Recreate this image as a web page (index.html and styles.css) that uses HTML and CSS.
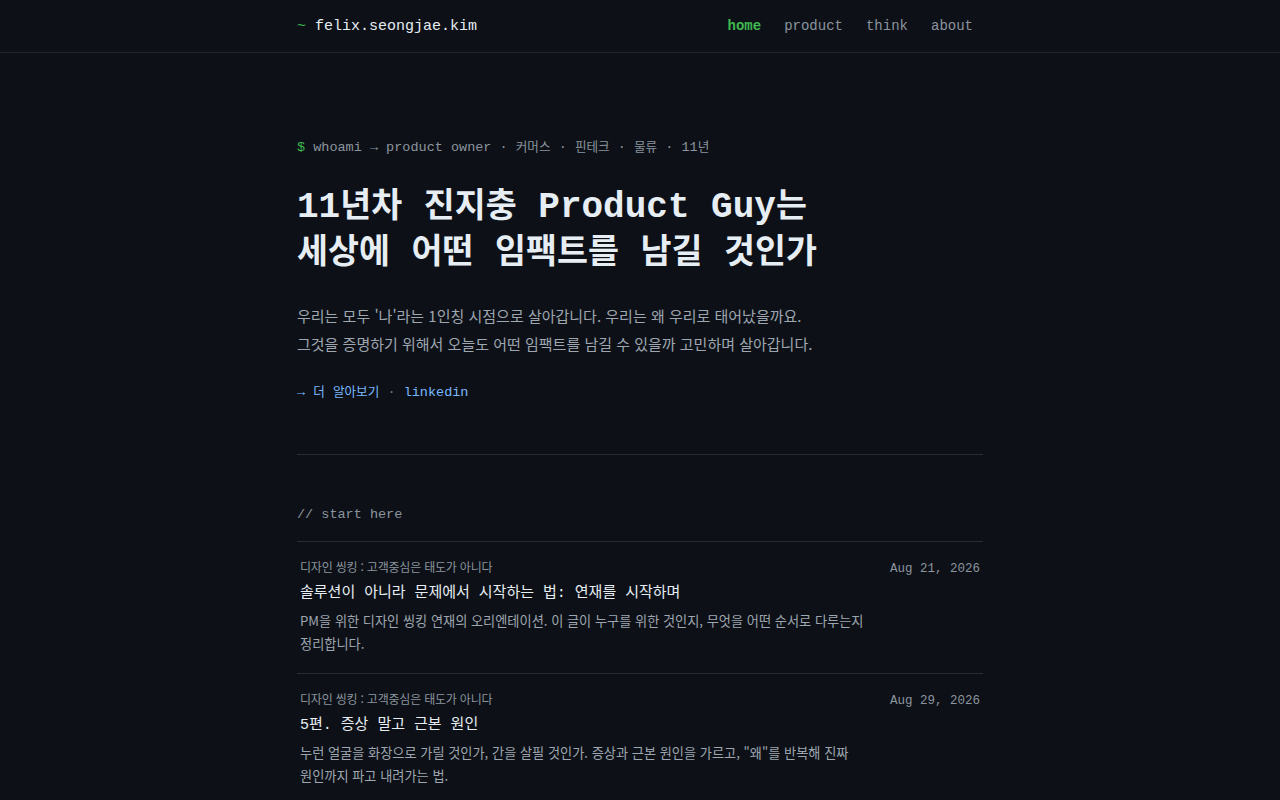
FILE: index.html
```html
<!DOCTYPE html>
<html lang="ko">
<head>
<meta charset="utf-8">
<title>felix.seongjae.kim</title>
<link rel="stylesheet" href="styles.css">
</head>
<body>
<header class="topbar">
  <div class="topbar-inner">
    <a class="logo" href="#"><span class="tilde">~</span> felix.seongjae.kim</a>
    <nav class="nav">
      <a class="active" href="#">home</a>
      <a href="#">product</a>
      <a href="#">think</a>
      <a href="#">about</a>
    </nav>
  </div>
</header>
<main class="wrap">
  <section class="hero">
    <p class="prompt"><span class="dollar">$</span> whoami → product owner · <span class="ko">커머스</span> · <span class="ko">핀테크</span> · <span class="ko">물류</span> · 11<span class="ko">년</span></p>
    <h1 class="title">11<span class="ko">년차</span> <span class="ko">진지충</span> Product Guy<span class="ko">는</span><br><span class="ko">세상에</span> <span class="ko">어떤</span> <span class="ko">임팩트를</span> <span class="ko">남길</span> <span class="ko">것인가</span></h1>
    <p class="lede">우리는 모두 '나'라는 1인칭 시점으로 살아갑니다. 우리는 왜 우리로 태어났을까요.<br>그것을 증명하기 위해서 오늘도 어떤 임팩트를 남길 수 있을까 고민하며 살아갑니다.</p>
    <p class="links"><a href="#">→ <span class="ko">더</span> <span class="ko">알아보기</span></a> <span class="sep">·</span> <a href="#">linkedin</a></p>
  </section>
  <section class="start">
    <h2 class="label">// start here</h2>
    <ul class="posts">
      <li class="post">
        <div class="post-main">
          <div class="series">디자인 씽킹 : 고객중심은 태도가 아니다</div>
          <h3 class="post-title">솔루션이 아니라 문제에서 시작하는 법: 연재를 시작하며</h3>
          <p class="desc">PM을 위한 디자인 씽킹 연재의 오리엔테이션. 이 글이 누구를 위한 것인지, 무엇을 어떤 순서로 다루는지 정리합니다.</p>
        </div>
        <time class="date">Aug 21, 2026</time>
      </li>
      <li class="post">
        <div class="post-main">
          <div class="series">디자인 씽킹 : 고객중심은 태도가 아니다</div>
          <h3 class="post-title">5편. 증상 말고 근본 원인</h3>
          <p class="desc">누런 얼굴을 화장으로 가릴 것인가, 간을 살필 것인가. 증상과 근본 원인을 가르고, "왜"를 반복해 진짜 원인까지 파고 내려가는 법.</p>
        </div>
        <time class="date">Aug 29, 2026</time>
      </li>
    </ul>
  </section>
</main>
</body>
</html>
```
FILE: styles.css
```css
* {
  box-sizing: border-box;
  margin: 0;
  padding: 0;
}

html, body {
  background: #0d1117;
}

body {
  color: #e6edf3;
  font-family: "Liberation Mono", "Noto Sans CJK KR", monospace;
  word-break: keep-all;
}

a {
  color: inherit;
  text-decoration: none;
}

.ko {
  font-family: "Noto Sans CJK KR", sans-serif;
  font-size: 0.935em;
  line-height: 1;
}

.topbar {
  border-bottom: 1px solid #21262d;
}

.topbar-inner {
  width: 686px;
  margin: 0 auto;
  height: 52px;
  display: flex;
  align-items: center;
  justify-content: space-between;
}

.logo {
  font-size: 15px;
  color: #e6edf3;
}

.logo .tilde {
  color: #3fb950;
}

.nav {
  display: flex;
  gap: 23px;
  padding-right: 10px;
  font-size: 14px;
}

.nav a {
  color: #8b949e;
}

.nav a.active {
  color: #3fb950;
  font-weight: 700;
}

.wrap {
  width: 686px;
  margin: 0 auto;
}

.hero {
  padding: 85px 0 51px;
  border-bottom: 1px solid #262c35;
}

.prompt {
  font-size: 13.5px;
  line-height: 20px;
  color: #8b949e;
}

.prompt .dollar {
  color: #3fb950;
}

.title {
  margin-top: 27px;
  font-size: 36px;
  line-height: 46px;
  font-weight: 700;
  color: #e6edf3;
}

.lede {
  margin-top: 25px;
  font-family: "Noto Sans CJK KR", sans-serif;
  font-size: 15px;
  line-height: 28px;
  color: #9ea6b0;
}

.links {
  margin-top: 25px;
  font-size: 13.5px;
  line-height: 20px;
  color: #79b8ff;
}

.links .sep {
  color: #6e7681;
}

.start {
  padding-top: 50px;
}

.label {
  font-size: 13.5px;
  line-height: 20px;
  font-weight: 400;
  color: #8b949e;
  margin-bottom: 16px;
}

.posts {
  list-style: none;
  border-top: 1px solid #262c35;
}

.post {
  display: grid;
  grid-template-columns: 1fr auto;
  column-gap: 20px;
  padding: 16px 3px 18px;
  border-bottom: 1px solid #262c35;
}

.series {
  font-family: "Noto Sans CJK KR", sans-serif;
  font-size: 12px;
  line-height: 18px;
  color: #8b949e;
  letter-spacing: -0.2px;
}

.post-title {
  margin-top: 6px;
  font-size: 15px;
  line-height: 24px;
  font-weight: 400;
  color: #e6edf3;
}

.desc {
  margin-top: 3px;
  font-family: "Noto Sans CJK KR", sans-serif;
  font-size: 13.2px;
  line-height: 23px;
  color: #9ea6b0;
}

.date {
  font-size: 12.5px;
  line-height: 18px;
  padding-top: 2px;
  color: #8b949e;
  white-space: nowrap;
}
```
